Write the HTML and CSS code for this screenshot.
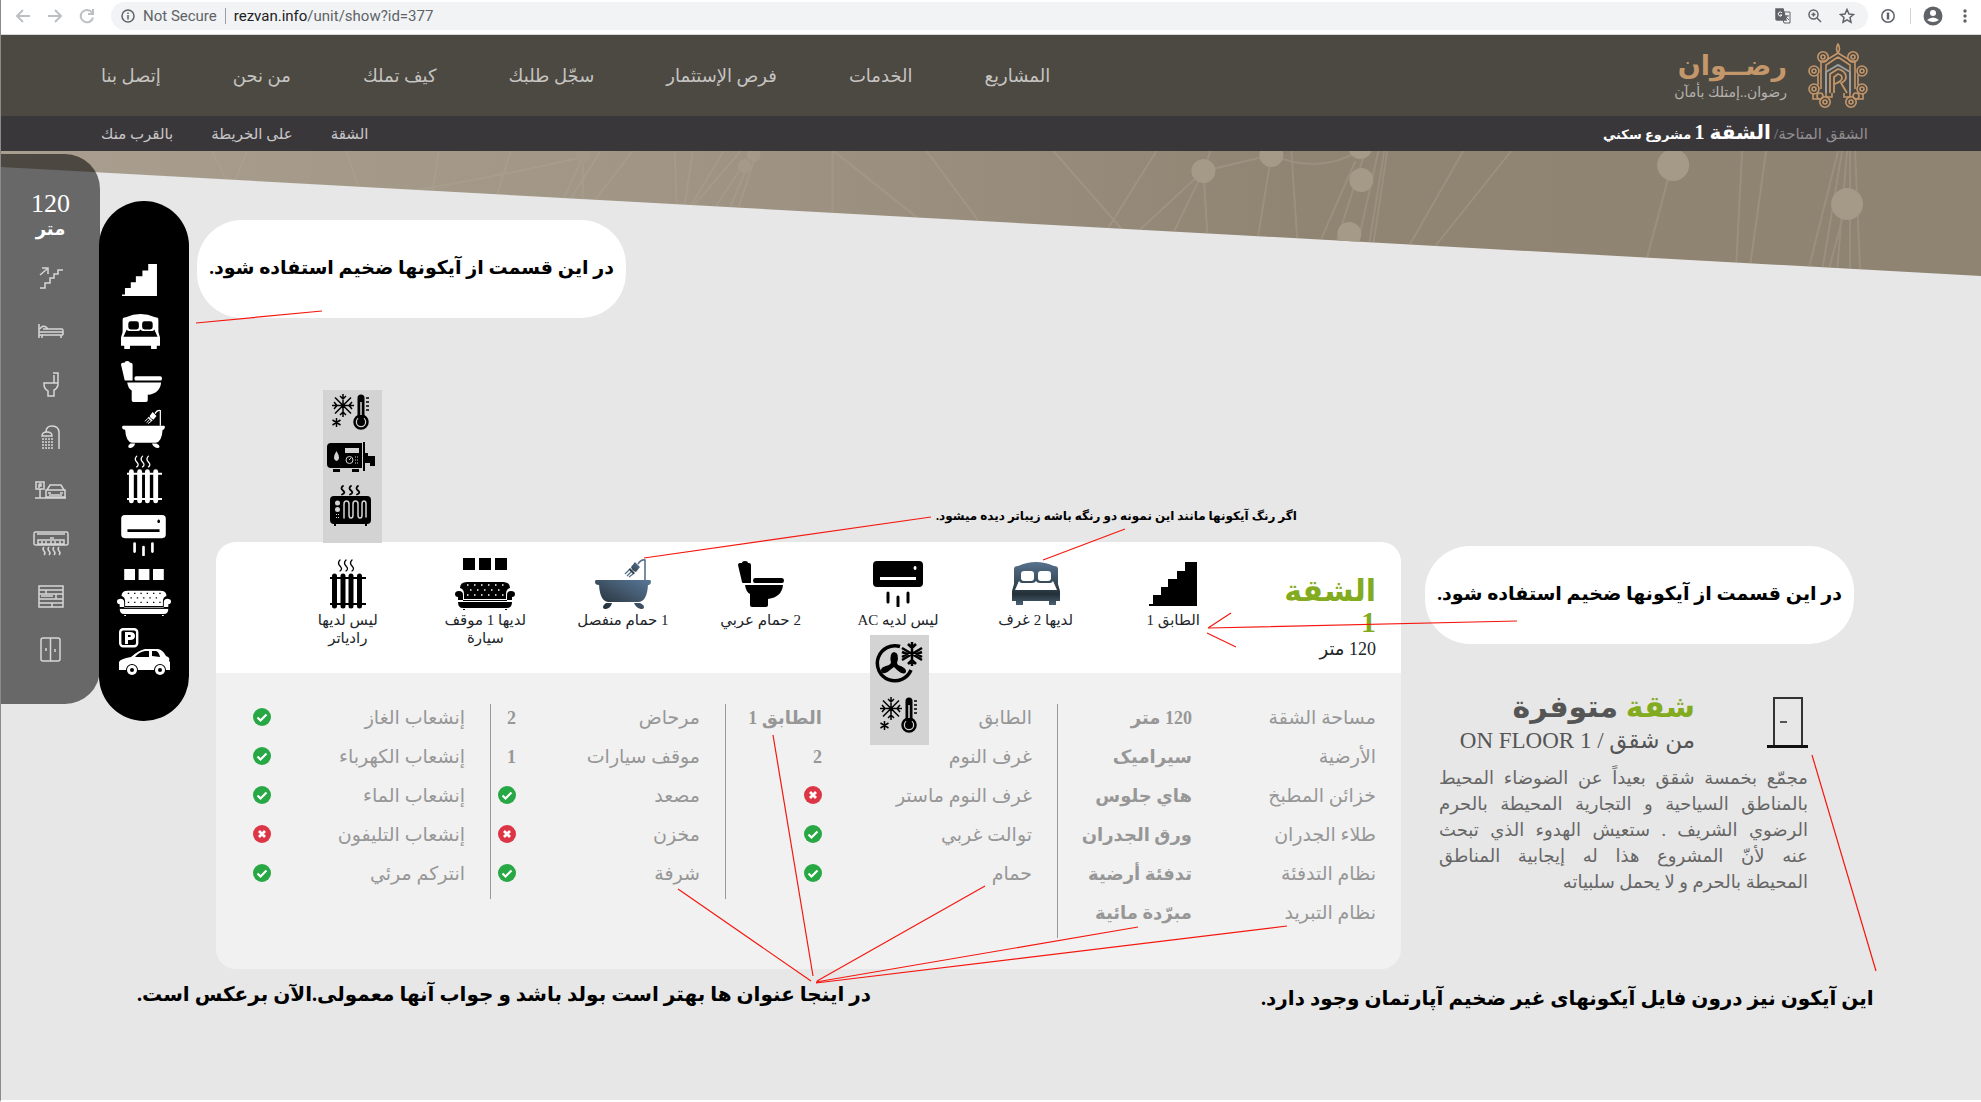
FILE: index.html
```html
<!DOCTYPE html>
<html lang="ar" dir="rtl">
<head>
<meta charset="utf-8">
<title>رضوان - الشقة 1</title>
<link rel="stylesheet" href="styles.css">
</head>
<body>
<svg class="sprite" aria-hidden="true">
  <defs>
    <linearGradient id="steel" x1="1" y1="0" x2="0" y2="1"><stop offset="0" stop-color="#58779a"/><stop offset=".45" stop-color="#42576a"/><stop offset="1" stop-color="#1d2830"/></linearGradient>
    <linearGradient id="steel-v" x1="0" y1="0" x2="0" y2="1"><stop offset="0" stop-color="#58738f"/><stop offset=".55" stop-color="#33444f"/><stop offset=".75" stop-color="#243038"/><stop offset="1" stop-color="#4a6173"/></linearGradient>
  </defs>
  <symbol id="stairs" viewBox="0 0 48 44"><path d="M0 44v-2h4v-9h8v-8h7v-8h9V9h8V0h12v44z"/></symbol>
  <symbol id="bed" viewBox="0 0 48 43"><path fill-rule="evenodd" d="M2 22V7q0-3 4-3Q24-4 42 4q4 0 4 3v15l2 7v10h-4v4h-7v-4H11v4H4v-4H0V29zM12 9q-3 0-3 3v4q0 3 3 3h7q3 0 3-3v-4q0-3-3-3zm17 0q-3 0-3 3v4q0 3 3 3h7q3 0 3-3v-4q0-3-3-3zM7 19L3 28h42l-4-9q-1 2-3 2H28q-3 0-4-2-1 2-4 2H10q-2 0-3-2z"/></symbol>
  <symbol id="toilet" viewBox="0 0 46 46"><path d="M0 4q0-2 2-2h2q0-2 3-2t3 2h1q2 0 2 2v18H5q-1 0-1-1zM17 17h27q2 0 2 2.500T44 22H17q-2 0-2-2.500T17 17zM7 24h38q-1 12-15 14v6q0 2-2 2H14q-2 0-2-2V33Q8 31 7 24z"/></symbol>
  <symbol id="bath" viewBox="0 0 56 51"><path d="M1 22h54q1 0 1 2t-2 3h-1q-1 16-9 17H13Q5 43 4 27q-4 0-4-3 0-2 1-2zM11 45h6q-1 5-6 6-3 0-3-2t3-4zM39 45h6q4 2 4 4t-3 2q-5-1-7-6z"/><path d="M50 22V2q-4-1-7 4" fill="none" stroke="currentColor" stroke-width="1.600"/><path d="M40 4l5 5-4 5q-4-1-5-5zM35 10l5 5-1.500 1.500-5-5z"/><path d="M34 12l-4 4m6-2l-4 4m6-2l-4 3" stroke="currentColor" stroke-width="1.300" fill="none"/></symbol>
  <symbol id="radiator" viewBox="0 0 36 50"><g fill="none" stroke="currentColor" stroke-linecap="round"><path stroke-width="5" d="M4.500 17v30M13 17v30M21 17v30M29.500 17v30"/><path stroke-width="2" d="M0 19h36M0 45h36" /><path stroke-width="1.300" d="M10 1q-3 3 0 6t0 5M16 1q-3 3 0 6t0 5M22 1q-3 3 0 6t0 5"/></g></symbol>
  <symbol id="ac" viewBox="0 0 50 46"><path fill-rule="evenodd" d="M4 0h42q4 0 4 4v18q0 4-4 4H4q-4 0-4-4V4q0-4 4-4zM7 16v3h36v-3zM42 5a1.500 2 0 1 0 .1 0z"/><path d="M15 32v9M25 36v9M35 32v9" stroke="currentColor" stroke-width="3" stroke-linecap="round"/></symbol>
  <symbol id="sofa" viewBox="0 0 60 52"><path d="M8 0h12v12H8zM24 0h12v12H24zM40 0h12v12H40zM5 30q0-6 7-6h36q7 0 7 6-4 1-4 6v5H9v-5q0-5-4-6zM0 36q0-3 4-3t4 4v6h44v-6q0-4 4-4t4 3-3 3v3H3v-3q-3 0-3-3zM3 44h54q0 6-5 6H8q-5 0-5-6zM8 51h2v1H8zM50 51h2v1h-2z"/><path class="studs" stroke-dasharray="1.500 5.500" d="M12 27h38M15 32h32M12 37h38" stroke-width="1.500" stroke="var(--stud,#fff)"/><path d="M3 43.500h54" stroke-width="1" stroke="var(--stud,#fff)"/></symbol>
  <symbol id="parking" viewBox="0 0 51 47"><rect x="1.200" y="1.200" width="17" height="17" rx="3" fill="none" stroke="currentColor" stroke-width="2.400"/><path fill-rule="evenodd" d="M6 4h5q5 0 5 4t-5 4H9v4H6zm3 3v2h2q2-1 0-2z"/><path fill-rule="evenodd" d="M0 42v-8q1-3 12-5 8-7 14-8h13q5 1 8 7l2 1q2 1 1 4l1 1v8h-4a6 6 0 0 0-12 0H19a6 6 0 0 0-12 0zM16 29h14v-6h-4q-6 1-10 6zM33 23v5l8 1q-1-5-4-6z"/><circle cx="13" cy="42" r="5"/><circle cx="41" cy="42" r="5"/><g fill="var(--stud,#fff)"><circle cx="13" cy="42" r="2"/><circle cx="41" cy="42" r="2"/></g></symbol>
  <symbol id="cold" viewBox="0 0 37 36"><g stroke="currentColor" fill="none" stroke-width="1.500"><path d="M11 0v23M0 11.500h22M3 3.500l16 16M19 3.500l-16 16M8 2l3 3 3-3M8 21l3-3 3 3M2 8l3 3.500L2 15M20 8l-3 3.500 3 3.500M4.500 24v9M.5 26l8 5M8.500 26l-8 5"/><path d="M34 4h3M34 8h3M34 12h3M34 16h3"/><circle cx="29" cy="28" r="6.500" stroke-width="2.500"/><path stroke-width="7" stroke-linecap="round" d="M29 4v18"/></g><circle cx="29" cy="28" r="4"/><path d="M29 8v13" stroke="#d3d3d3" stroke-width="1.500"/></symbol>
  <symbol id="boiler" viewBox="0 0 48 31"><path fill-rule="evenodd" d="M4 1h31v25H4q-4 0-4-4V5q0-4 4-4zm14 5v5h14V6zM9.500 9q-5 8 0 10 5-2 0-10z"/><path d="M36 0h2v29h-2zM38 11h3v3h7v10h-5v-3h-5zM6 27h7v3H6zM25 27h7v3h-7z"/><g fill="none" stroke="#d3d3d3"><circle cx="22.500" cy="18" r="3.500"/><path d="M22 18l2-2M28 15h1M30 15h1M28 18h1M30 18h1M28 21h1M30 21h1"/></g></symbol>
  <symbol id="heater" viewBox="0 0 41 41"><path d="M4 11h33q4 0 4 4v20q0 4-4 4H4q-4 0-4-4V15q0-4 4-4zM4 39h2v2H4zM35 39h2v2h-2z"/><g fill="none" stroke-linecap="round"><path stroke="currentColor" stroke-width="1.800" d="M13 1q-3 2 0 4.500t-1 4M21 1q-3 2 0 4.500t-1 4M28 1q-3 2 0 4.500t-1 4"/><path stroke="#d3d3d3" stroke-width="1.500" d="M14 33V19q0-3 2.500-3t2.500 3v11q0 3 2 3t2-3V19q0-3 2.500-3t2.500 3v11q0 3 2 3t2-3V19q0-3 2-3t2 3v13"/></g><g fill="#d3d3d3"><circle cx="7.500" cy="18" r="2.500"/><circle cx="7.500" cy="24.500" r="2.500"/><path d="M6 29h1v1H6zM8 29h1v1H8zM6 32h1v1H6zM8 32h1v1H8z"/></g></symbol>
  <symbol id="fan" viewBox="0 0 48 42"><g fill="none" stroke="currentColor"><path stroke-width="3.500" d="M25 4.500A17.500 17.500 0 1 0 36 28"/><path stroke-width="2.500" d="M37 0v24M27 6l20 12M27 18L47 6M33 2l4 4 4-4M33 22l4-4 4 4M27 10l5 2-5 3M47 10l-5 2 5 3"/></g><path d="M16 21q-2-10 3-11 6 1 3 11l1 2q9 3 8 7-2 4-9-2l-3-3-4 3q-7 6-9 1-1-4 8-6z"/></symbol>
  <symbol id="ok" viewBox="0 0 18 18"><circle cx="9" cy="9" r="9" fill="#28a745"/><path d="M4.500 9.500l3 3 6-6" fill="none" stroke="#fff" stroke-width="2.200"/></symbol>
  <symbol id="no" viewBox="0 0 18 18"><circle cx="9" cy="9" r="9" fill="#dc3545"/><path d="M6 6l6 6M12 6l-6 6" fill="none" stroke="#fff" stroke-width="2.800"/></symbol>
</svg>

<div class="browser" dir="ltr">
  <button class="tool" aria-label="Back"><svg width="16" height="16" viewBox="0 0 16 16"><path d="M15 8H2M8 2L2 8l6 6" /></svg></button>
  <button class="tool" aria-label="Forward"><svg width="16" height="16" viewBox="0 0 16 16"><path d="M1 8h13M8 2l6 6-6 6"/></svg></button>
  <button class="tool" aria-label="Reload"><svg width="16" height="16" viewBox="0 0 16 16"><path d="M13 4.500A6.200 6.200 0 1 0 14 9.500M14 1v5H9"/></svg></button>
  <div class="address">
    <svg class="info-dot" width="14" height="14" viewBox="0 0 14 14"><circle cx="7" cy="7" r="6"/><path d="M7 6v4.500M7 3.500V5"/></svg>
    <span class="secure">Not Secure</span>
    <span class="url"><b>rezvan.info</b>/unit/show?id=377</span>
    <button class="tool dark" aria-label="Translate"><svg width="16" height="16" viewBox="0 0 16 16"><path d="M1 1h7l3 11H2q-1 0-1-1z" fill="#5f6368"/><path d="M9 4h6v11H9l-1-3M10 8h4M12 7q0 3-2 4M11 9l3 3" stroke-width="1"/><path class="white" d="M7 5a2 2 0 1 0 0 2H5"/></svg></button>
    <button class="tool dark" aria-label="Zoom"><svg width="16" height="16" viewBox="0 0 16 16"><circle cx="6.500" cy="6.500" r="4.500"/><path d="M10 10l4 4M4.500 6.500h4M6.500 4.500v4"/></svg></button>
    <button class="tool dark" aria-label="Bookmark"><svg width="16" height="16" viewBox="0 0 16 16"><path d="M8 1.500l2 4.500 4.500.5-3.500 3 1 4.700L8 11.800l-4 2.400 1-4.700-3.500-3L6 6z"/></svg></button>
  </div>
  <button class="tool dark" aria-label="Extension"><svg width="16" height="16" viewBox="0 0 16 16"><circle cx="8" cy="8" r="6.200"/><path d="M8 4.500v7" stroke-width="2.500"/></svg></button>
  <span class="bar"></span>
  <button class="tool dark" aria-label="Profile"><svg width="20" height="20" viewBox="0 0 20 20"><circle cx="10" cy="10" r="9.500" fill="#5f6368" stroke="none"/><circle cx="10" cy="7" r="3" fill="#fff" stroke="none"/><path d="M4 14q6-5 12 0-6 4-12 0z" fill="#fff" stroke="none"/></svg></button>
  <button class="tool dark menu" aria-label="Menu"><svg width="4" height="16" viewBox="0 0 4 16"><g fill="#5f6368" stroke="none"><circle cx="2" cy="3" r="1.700"/><circle cx="2" cy="8" r="1.700"/><circle cx="2" cy="13" r="1.700"/></g></svg></button>
</div>

<header class="header">
  <a class="brand" href="#">
    <svg width="60" height="66" viewBox="0 0 60 66" fill="none" stroke="#c4976b" stroke-width="1.600">
      <path d="M30 1q-3 5 0 9 3-4 0-9zM30 10L17 18h-4v8M30 10l13 8h4v8M30 14l-12 8v32h6v-4M30 14l12 8v32h-6v-4M13 26v20M47 26v20M10 32v10M50 32v10M5 50v6h6M55 50v6h-6"/>
      <circle cx="15" cy="14" r="5.200"/><circle cx="15" cy="14" r="2"/><circle cx="45" cy="14" r="5.200"/><circle cx="45" cy="14" r="2"/>
      <circle cx="6" cy="28" r="5"/><circle cx="6" cy="28" r="2"/><circle cx="54" cy="28" r="5"/><circle cx="54" cy="28" r="2"/>
      <circle cx="6" cy="46" r="5"/><circle cx="6" cy="46" r="2"/><circle cx="54" cy="46" r="5"/><circle cx="54" cy="46" r="2"/>
      <circle cx="17" cy="59" r="5.200"/><circle cx="17" cy="59" r="2"/><circle cx="43" cy="59" r="5.200"/><circle cx="43" cy="59" r="2"/>
      <circle cx="12" cy="53" r="3"/><circle cx="48" cy="53" r="3"/>
      <path stroke="#9c9d9e" stroke-width="2" d="M18 50V29l12-7 12 7v21"/>
      <path stroke-width="1.800" d="M22 50V31l8-5q8 2 8 8 0 4-5 6l6 10M26 50V34l4-3q4 1 4 4t-7 6"/>
    </svg>
    <span class="brand-text"><strong>رضــوان</strong><small>رضوان..إمتلك بأمآن</small></span>
  </a>
  <nav class="main-nav"><a href="#">المشاريع</a><a href="#">الخدمات</a><a href="#">فرص الإستثمار</a><a href="#">سجّل طلبك</a><a href="#">كيف تملك</a><a href="#">من نحن</a><a href="#">إتصل بنا</a></nav>
</header>
<div class="subbar">
  <p class="crumbs"><a href="#">الشقق المتاحة/</a> <strong>الشقة 1</strong> <span>مشروع سكني</span></p>
  <nav class="sub-nav"><a href="#">الشقة</a><a href="#">على الخريطة</a><a href="#">بالقرب منك</a></nav>
</div>

<svg class="hero" viewBox="0 0 1981 125" preserveAspectRatio="none" aria-hidden="true">
  <defs><linearGradient id="sand"><stop offset="0" stop-color="#a99e8f"/><stop offset=".3" stop-color="#a29686"/><stop offset=".55" stop-color="#968a7a"/><stop offset=".65" stop-color="#908472"/><stop offset="1" stop-color="#8f8372"/></linearGradient>
  <clipPath id="slope"><path d="M0 0h1981v125L0 16z"/></clipPath></defs>
  <g clip-path="url(#slope)"><path fill="url(#sand)" d="M0 0h1981v125H0z"/>
  <g fill="none" stroke="#b3a797" stroke-opacity=".35" stroke-width="2"><path d="M211 0l15 30M246 0l-12 30M345 0l14 40M438 0l-6 40M510 0l-14 45M410 40q90-15 172-34v48M582 6l-22 48M600 0l-34 54M632 0l-40 52M674 0l2 55M692 0l-8 55M723 0l-36 60M740 0l-50 58M742 15l-30 45M745 20l-18 42M755 5l-20 60M832 0v65M833 0l88 70M926 0l52 70M1053 0l70 80M1156 0l-50 80M1203 20l-65 60M1203 20l-33 68M1203 20l4 64M1210 0l-7 20 68-16q50 20 89-5M1270 10l-13 80M1291 0l6 90M1355 10l-35 80M1365 0l-30 95M1378 0l-20 90M1384 0l-16 98M1387 0l-15 100M1463 0l-60 105M1511 0l-80 100M1670 20l-24 90M1742 0l-6 115M1766 0l-16 115M1838 0l-30 120M1842 0l-20 120M1847 0l-10 120M1850 0v120M1855 0l5 120M1847 50l-20 75"/></g>
  <g fill="#a59988"><circle cx="753" cy="4" r="7"/><circle cx="744" cy="15" r="7"/><circle cx="582" cy="5" r="7"/><circle cx="1203" cy="20" r="12"/><circle cx="1271" cy="4" r="12"/><circle cx="1360" cy="-4" r="12"/><circle cx="1361" cy="29" r="12"/><circle cx="1349" cy="83" r="12"/><circle cx="1673" cy="14" r="16"/><circle cx="1847" cy="53" r="16"/></g></g>
</svg>

<main class="main">
  <section class="about">
    <div class="about-head">
      <svg width="41" height="51" viewBox="0 0 41 51" fill="none"><path d="M7 49V1h28v48" stroke="#333" stroke-width="2"/><path d="M0 49.500h41" stroke="#111" stroke-width="3"/><path d="M13 25h7" stroke="#555" stroke-width="2"/></svg>
      <h1><b><i>شقة</i> متوفرة</b><span>من شقق / ON FLOOR 1</span></h1>
    </div>
    <p>مجمّع بخمسة شقق بعيداً عن الضوضاء المحيط بالمناطق السياحية و التجارية المحيطة بالحرم الرضوي الشريف . ستعيش الهدوء الذي تبحث عنه&nbsp;لأنّ المشروع هذا له إيجابية المناطق المحيطة&nbsp;بالحرم و لا يحمل سلبياته</p>
  </section>

  <section class="card">
    <div class="summary">
      <div class="unit"><h2>الشقة 1</h2><p>120 متر</p></div>
      <ul class="features">
        <li><svg width="48" height="44"><use href="#stairs"/></svg><span>الطابق 1</span></li>
        <li><svg width="48" height="43" fill="url(#steel-v)"><use href="#bed"/></svg><span>لديها 2 غرف</span></li>
        <li><svg width="50" height="46"><use href="#ac"/></svg><span>ليس لديه AC</span></li>
        <li><svg width="46" height="46"><use href="#toilet"/></svg><span>2 حمام عربي</span></li>
        <li><svg class="steel" width="56" height="51" fill="url(#steel)"><use href="#bath"/></svg><span>1 حمام منفصل</span></li>
        <li><svg width="60" height="52"><use href="#sofa"/></svg><span>لديها 1 موقف سيارة</span></li>
        <li><svg width="36" height="50"><use href="#radiator"/></svg><span>ليس لديها رادياتر</span></li>
      </ul>
    </div>
    <div class="details">
      <table class="wide">
        <tr><th>مساحة الشقة</th><td>120 متر</td></tr>
        <tr><th>الأرضية</th><td>سيراميک</td></tr>
        <tr><th>خزائن المطبخ</th><td>هاي جلوس</td></tr>
        <tr><th>طلاء الجدران</th><td>ورق الجدران</td></tr>
        <tr><th>نظام التدفئة</th><td>تدفئة أرضية</td></tr>
        <tr><th>نظام التبريد</th><td>مبرّدة مائية</td></tr>
      </table>
      <table class="rooms">
        <tr><th>الطابق</th><td>الطابق 1</td></tr>
        <tr><th>غرف النوم</th><td>2</td></tr>
        <tr><th>غرف النوم ماستر</th><td><svg><use href="#no"/></svg></td></tr>
        <tr><th>توالت غربي</th><td><svg><use href="#ok"/></svg></td></tr>
        <tr><th>حمام</th><td><svg><use href="#ok"/></svg></td></tr>
      </table>
      <table class="extras">
        <tr><th>مرحاض</th><td>2</td></tr>
        <tr><th>موقف سيارات</th><td>1</td></tr>
        <tr><th>مصعد</th><td><svg><use href="#ok"/></svg></td></tr>
        <tr><th>مخزن</th><td><svg><use href="#no"/></svg></td></tr>
        <tr><th>شرفة</th><td><svg><use href="#ok"/></svg></td></tr>
      </table>
      <table class="lines">
        <tr><th>إنشعاب الغاز</th><td><svg><use href="#ok"/></svg></td></tr>
        <tr><th>إنشعاب الكهرباء</th><td><svg><use href="#ok"/></svg></td></tr>
        <tr><th>إنشعاب الماء</th><td><svg><use href="#ok"/></svg></td></tr>
        <tr><th>إنشعاب التليفون</th><td><svg><use href="#no"/></svg></td></tr>
        <tr><th>انتركم مرئي</th><td><svg><use href="#ok"/></svg></td></tr>
      </table>
    </div>
  </section>
</main>

<aside class="dock">
  <p><b>120</b>متر</p>
  <ul>
    <li><svg width="24" height="22" viewBox="0 0 24 22"><path d="M1 21h5v-5h5v-5h4V7h4V3h5M1 8l7-6M3 1h6v6"/></svg></li>
    <li><svg width="26" height="16" viewBox="0 0 26 16"><path d="M1 1v14M1 12h24M1 9h24v3M4 15v-3M23 15v-3M5 6h19q1 0 1 3M2 6q2-4 6-2l2 2"/></svg></li>
    <li><svg width="16" height="25" viewBox="0 0 16 25"><path d="M10 1h5v10M11 3v8M1 11h14v2q-1 4-4 5v6H5v-5Q1 17 1 12z"/></svg></li>
    <li><svg width="19" height="24" viewBox="0 0 19 24"><path d="M18 24V8q0-7-7-7-6 0-6 6M1 11q0-4 5-4t5 4z"/><path stroke-dasharray="2 1" d="M1 14h11M1 17h11M1 20h11M1 23h11"/></svg></li>
    <li><svg width="31" height="18" viewBox="0 0 31 18"><path d="M1 1h8v7H1zM5 8v9M0 17h31M4 3v4M4 3h2v2H4M12 9l3-5h11l3 5M11 9h19v7H11zM13 12h3M25 12h3M14 14h13"/></svg></li>
    <li><svg width="36" height="25" viewBox="0 0 36 25"><path d="M2 1h32q1 0 1 2v10q0 1-2 1H3q-2 0-2-1V3q0-2 1-2zM4 3h28M5 9h26v4H5zM9 10v3M13 10v3M18 10v3M22 10v3M27 10v3M17 7h4"/><path d="M11 16q-2 2 0 4t0 4M16 16q-2 2 0 4t0 4M21 16q-2 2 0 4t0 4M26 16q-2 2 0 4t0 4"/></svg></li>
    <li><svg width="26" height="23" viewBox="0 0 26 23"><path d="M1 1h24v21H1zM1 5h24M1 9h24M1 14h24M1 18h24M8 5v4M18 9v5M14 18v4M11 14h6M3 11h12"/></svg></li>
    <li><svg width="21" height="25" viewBox="0 0 21 25"><path d="M3 1h15q2 0 2 2v19q0 2-2 2H3q-2 0-2-2V3q0-2 2-2zM10.500 1v23M6 11v3M15 12v3"/></svg></li>
  </ul>
</aside>

<svg class="pill" width="90" height="520" viewBox="0 0 90 520">
  <rect width="90" height="520" rx="45" fill="#000"/>
  <use href="#stairs" x="23" y="63" width="35" height="32"/><use href="#bed" x="22" y="113" width="39" height="35"/><use href="#toilet" x="22" y="160" width="41" height="41"/><use href="#bath" x="23" y="208" width="43" height="39"/><use href="#radiator" x="28" y="254" width="35" height="49"/><use href="#ac" x="22" y="314" width="45" height="41"/><use href="#sofa" x="18" y="368" width="54" height="47"/><use href="#parking" x="20" y="427" width="51" height="47"/>
</svg>

<div class="swatch heating"><svg width="37" height="36"><use href="#cold"/></svg><svg width="48" height="31"><use href="#boiler"/></svg><svg width="41" height="41"><use href="#heater"/></svg></div>
<div class="swatch cooling"><svg width="48" height="42"><use href="#fan"/></svg><svg width="37" height="36"><use href="#cold"/></svg></div>

<p class="note bubble first">در این قسمت از آیکونها ضخیم استفاده شود.</p>
<p class="note bubble second">در این قسمت از آیکونها ضخیم استفاده شود.</p>
<p class="note small">اگر رنگ آیکونها مانند این نمونه دو رنگه باشه زیباتر دیده میشود.</p>
<p class="note titles">در اینجا عنوان ها بهتر است بولد باشد و جواب آنها معمولی.الآن برعکس است.</p>
<p class="note door">این آیکون نیز درون فایل آیکونهای غیر ضخیم آپارتمان وجود دارد.</p>

<svg class="arrows" width="1981" height="1100" viewBox="0 0 1981 1100" aria-hidden="true">
  <path d="M196 323l126-12M644 558l287-41M1043 560l82-31M1208 628l309-7M1208 628l23-15M1207 633l29 14M678 889l133 92M773 735l40 241M817 981l168-95M816 982l322-55M816 983l471-57M1812 755l64 216"/>
</svg>
</body>
</html>
```
FILE: styles.css
```css
* { box-sizing: border-box; }
body {
  margin: 0;
  position: relative;
  background: #e7e7e7;
  border-left: 1px solid #8a8a8a;
  border-bottom: 2px solid #fff;
  font-family: "Liberation Serif", "DejaVu Sans", sans-serif;
  color: #212529;
}
a { color: inherit; text-decoration: none; }
h1, h2, p, ul { margin: 0; padding: 0; font-weight: normal; }
ul { list-style: none; }
.sprite { position: absolute; width: 0; height: 0; }

/* browser bar */
.browser {
  display: flex;
  align-items: center;
  height: 35px;
  padding: 0 14px 2px 14px;
  background: #fff;
  border-bottom: 1px solid #d5d8dc;
  font: 15px/28px Roboto, sans-serif;
  color: #5f6368;
}
.tool { display: flex; margin: 0 16px 0 0; padding: 0; border: 0; background: none; }
.tool svg { fill: none; stroke: #bdc0c3; stroke-width: 2; }
.tool.dark { margin: 0; }
.tool.dark svg { stroke: #5f6368; stroke-width: 1.5px; }
.tool .white { stroke: #fff; stroke-width: 1px; }
.address {
  flex: 1;
  display: flex;
  align-items: center;
  height: 28px;
  margin-right: 12px;
  padding: 0 13px 0 10px;
  border-radius: 14px;
  background: #f1f3f4;
}
.address .tool { margin-left: 16px; }
.info-dot { fill: none; stroke: #5f6368; stroke-width: 1.5px; }
.secure { margin-left: 8px; padding-right: 8px; line-height: 16px; border-right: 1px solid #9aa0a6; }
.url { flex: 1; padding-left: 8px; }
.url b { font-weight: normal; color: #202124; }
.bar { width: 1px; height: 16px; margin: 0 12px 0 14px; background: #d0d3d6; }
.tool.menu { margin-left: 20px; }

/* site header */
.header, .subbar { display: flex; justify-content: space-between; align-items: center; padding: 0 113px 0 100px; }
.header { height: 81px; background: #4c4842; color: #c5c4c1; }
.brand { display: flex; align-items: center; gap: 21px; }
.brand-text { display: flex; flex-direction: column; }
.brand strong { font-size: 27px; line-height: 34px; color: #c4976b; }
.brand small { font-size: 14px; line-height: 20px; color: #b5b3b0; }
.main-nav { display: flex; gap: 72px; font-size: 18px; }
.subbar { height: 35px; background: #3a373b; color: #c8c7c8; font-size: 15px; }
.sub-nav { display: flex; gap: 38px; }
.crumbs { color: #fff; font-weight: bold; line-height: 35px; font-size: 13px; }
.crumbs a { color: #908e8f; font-size: 15px; font-weight: normal; }
.crumbs strong { font-size: 20px; }
.hero { position: absolute; top: 151px; left: 0; width: 100%; height: 125px; }

/* content */
.main { position: relative; display: flex; gap: 38px; align-items: flex-start; padding: 391px 173px 131px 215px; }
.about { flex: none; width: 369px; padding-top: 147px; }
.about-head { display: flex; gap: 72px; padding-top: 8px; }
.about h1 { margin-top: -8px; font-size: 23px; line-height: 32px; color: #555; white-space: nowrap; }
.about h1 b { display: block; font-size: 30px; line-height: 36px; }
.about h1 i { font-style: normal; color: #83ab20; }
.about h1 span { display: block; }
.about p { margin-top: 8px; font-size: 18px; line-height: 26px; text-align: justify; color: #666; }
.card { flex: 1; border-radius: 20px; background: #f1f1f1; overflow: hidden; }
.summary { display: flex; height: 131px; padding: 0 25px 0 63px; background: #fff; }
.unit { flex: none; width: 134px; padding-top: 33px; }
.unit h2 { width: 98px; font-size: 30px; line-height: 31px; font-weight: bold; color: #83ab20; }
.unit p { font-size: 18px; line-height: 24px; }
.features { flex: 1; display: grid; grid-template-columns: repeat(7, 1fr); padding-top: 14px; }
.features li { display: flex; flex-direction: column; align-items: center; text-align: center; font-size: 15px; line-height: 18px; color: #212529; }
.features svg { flex: none; margin: auto 0; color: #000; }
.features .steel { color: #58728a; }
.features span { width: 98px; height: 62px; flex: none; }
.details { display: grid; grid-template-columns: 344fr 332fr 235fr 274fr; align-items: start; padding: 31px 0; min-height: 296px; }
.details table { width: 100%; border-collapse: collapse; table-layout: fixed; font-size: 18px; line-height: 28px; color: #979797; }
.details tr { height: 39px; }
.details th, .details td { padding: 0; text-align: right; vertical-align: top; font-weight: normal; white-space: nowrap; }
.details th { padding-right: 25px; font-size: 19px; }
.details td { font-weight: bold; }
.details td svg { display: block; width: 18px; height: 18px; margin-top: 4px; }
.wide, .rooms, .extras { border-left: 1px solid #999; }
.wide th { width: 209px; }
.rooms th { width: 235px; }
.extras th { width: 209px; }
.lines th { width: 219px; }

/* floating icon dock */
.dock { position: absolute; top: 154px; left: 0; width: 99px; height: 550px; padding-top: 36px; border-radius: 0 35px 35px 0; background: rgba(0, 0, 0, .55); color: #fff; text-align: center; }
.dock p { font-size: 18px; line-height: 22px; font-weight: bold; }
.dock b { display: block; font-size: 26px; line-height: 28px; font-weight: normal; }
.dock ul { display: flex; flex-direction: column; gap: 25px; padding-top: 24px; }
.dock li { display: flex; justify-content: center; align-items: center; height: 28px; }
.dock svg { fill: none; stroke: #d6d6d6; stroke-width: 1.5px; }

/* review annotations */
.pill { position: absolute; top: 201px; left: 98px; color: #fff; fill: #fff; --stud: #000; }
.swatch { position: absolute; display: flex; flex-direction: column; align-items: center; width: 59px; background: #d3d3d3; color: #000; }
.heating { top: 390px; left: 322px; height: 153px; padding: 4px 4px 0 0; gap: 12px; }
.cooling { top: 635px; left: 869px; height: 110px; padding: 7px 2px 0 0; gap: 13px; }
.note { position: absolute; font-size: 20px; line-height: 30px; font-weight: bold; color: #000; white-space: nowrap; }
.bubble { width: 429px; height: 98px; padding: 33px 12px; border-radius: 45px; background: #fff; font-size: 19px; }
.first { top: 220px; left: 196px; }
.second { top: 546px; left: 1424px; }
.note.small { top: 501px; left: 935px; font-size: 12px; }
.titles { top: 979px; left: 136px; }
.door { top: 983px; left: 1260px; }
.arrows { position: absolute; top: 0; left: -1px; fill: none; stroke: #f5170f; stroke-width: 1.2px; }
```
